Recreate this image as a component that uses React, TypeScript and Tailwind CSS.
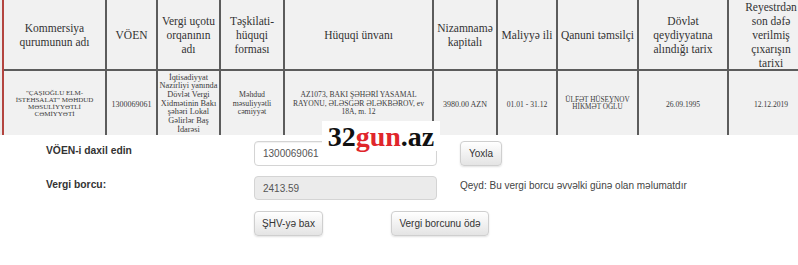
import React from "react";

const head = [
    { w: "Kommersiya|qurumunun adı" },
    { w: "VÖEN" },
    { w: "Vergi uçotu|orqanının|adı" },
    { w: "Təşkilati-|hüquqi|forması" },
    { w: "Hüquqi ünvanı" },
    { w: "Nizamnamə|kapitalı" },
    { w: "Maliyyə ili" },
    { w: "Qanuni təmsilçi" },
    { w: "Dövlət|qeydiyyatına|alındığı tarix" },
    { w: "Reyestrdən|son dəfə|verilmiş|çıxarışın|tarixi" },
];

const row = [
    { t: "\"ÇAŞIOĞLU ELM-|İSTEHSALAT\" MƏHDUD|MƏSULİYYƏTLİ|CƏMİYYƏTİ", c: "text-[7px] leading-[7px]" },
    { t: "1300069061", c: "text-[8px] leading-[9px]" },
    { t: "İqtisadiyyat|Nazirliyi yanında|Dövlət Vergi|Xidmətinin Bakı|şəhəri Lokal|Gəlirlər Baş|İdarəsi", c: "text-[8.3px] leading-[8.7px]" },
    { t: "Məhdud|məsuliyyətli|cəmiyyət", c: "text-[7.8px] leading-[8.5px]" },
    { t: "AZ1073, BAKI ŞƏHƏRİ YASAMAL|RAYONU, ƏLƏSGƏR ƏLƏKBƏROV, ev|18A, m. 12", c: "text-[7.6px] leading-[8.5px]" },
    { t: "3980.00 AZN", c: "text-[8px] leading-[9px]" },
    { t: "01.01 - 31.12", c: "text-[7.6px] leading-[9px]" },
    { t: "ÜLFƏT HÜSEYNOV|HİKMƏT OĞLU", c: "text-[7.2px] leading-[7.2px]" },
    { t: "26.09.1995", c: "text-[7.6px] leading-[9px]" },
    { t: "12.12.2019", c: "text-[7.6px] leading-[9px]" },
];

function Lines({ text }: { text: string }) {
    const parts = text.split("|");
    return (
        <>
            {parts.map((p, i) => (
                <React.Fragment key={i}>
                    {p}
                    {i < parts.length - 1 && <br />}
                </React.Fragment>
            ))}
        </>
    );
}

const cols = "grid grid-cols-[103px_51px_63px_64px_149px_64px_60px_81px_90px_86px]";

function Btn({ label, className }: { label: string; className: string }) {
    return (
        <button
            className={`h-[25px] rounded-[4px] border border-[#cfcfcf] bg-gradient-to-b from-white to-[#e4e4e4] text-[10px] text-[#333] shadow-[0_1px_2px_rgba(0,0,0,0.12)] ${className}`}
        >
            {label}
        </button>
    );
}

export default function App() {
    return (
        <div className="relative w-[798px] h-[265px] overflow-hidden bg-white font-['Liberation_Sans',Arial,sans-serif]">
            {/* table strip */}
            <div className="h-[135px] overflow-hidden bg-[#ececec] pl-[2px]">
                <div className="w-max border-l-2 border-[#b3443f] bg-[#f1f1f1] font-['Liberation_Serif',serif] text-[#333]">
                    <div className={cols}>
                        {head.map((h, i) => (
                            <div
                                key={i}
                                className="h-[71px] flex items-center justify-center text-center whitespace-nowrap border-r-2 border-b-2 border-[#5c5c5c] text-[11.5px] leading-[14px]"
                            >
                                <div>
                                    <Lines text={h.w} />
                                </div>
                            </div>
                        ))}
                    </div>
                    <div className={cols}>
                        {row.map((d, i) => (
                            <div
                                key={i}
                                className={`h-[66px] flex items-center justify-center text-center whitespace-nowrap border-r-2 border-[#5c5c5c] text-[#3a3a3a] ${d.c}`}
                            >
                                <div>
                                    <Lines text={d.t} />
                                </div>
                            </div>
                        ))}
                    </div>
                </div>
            </div>

            {/* form */}
            <div className="pt-[6px] pl-[46px] text-[10px] text-[#333] flex flex-col gap-[10px]">
                <div className="flex items-start">
                    <div className="w-[208px] pt-[2px] font-bold text-[10.3px]">VÖEN-i daxil edin</div>
                    <div className="w-[183px] h-[25px] rounded-[4px] border border-[#d4d4d4] bg-white px-[8px] flex items-center text-[#555] shadow-[inset_0_1px_1px_rgba(0,0,0,0.06)]">
                        1300069061
                    </div>
                    <Btn label="Yoxla" className="ml-[23px] w-[42px]" />
                </div>
                <div className="flex items-start">
                    <div className="w-[208px] pt-[1px] font-bold text-[10.3px]">Vergi borcu:</div>
                    <div className="w-[183px] h-[24px] rounded-[4px] border border-[#d4d4d4] bg-[#ebebeb] px-[8px] flex items-center text-[#555]">
                        2413.59
                    </div>
                    <div className="ml-[23px] pt-[2px] text-[#444]">Qeyd: Bu vergi borcu əvvəlki günə olan məlumatdır</div>
                </div>
                <div className="flex items-start pt-[1px]">
                    <div className="w-[208px]" />
                    <Btn label="ŞHV-yə bax" className="w-[69px]" />
                    <Btn label="Vergi borcunu ödə" className="ml-[68px] w-[98px]" />
                </div>
            </div>

            {/* watermark logo */}
            <div className="absolute left-[322px] top-[121px] w-[118px] h-[30px] bg-white flex items-end justify-center">
                <span className="font-['Liberation_Serif',serif] font-bold text-[28px] leading-[28px] text-[#111]">
                    32<span className="text-[#e0262b]">gun</span>.az
                </span>
            </div>
        </div>
    );
}
